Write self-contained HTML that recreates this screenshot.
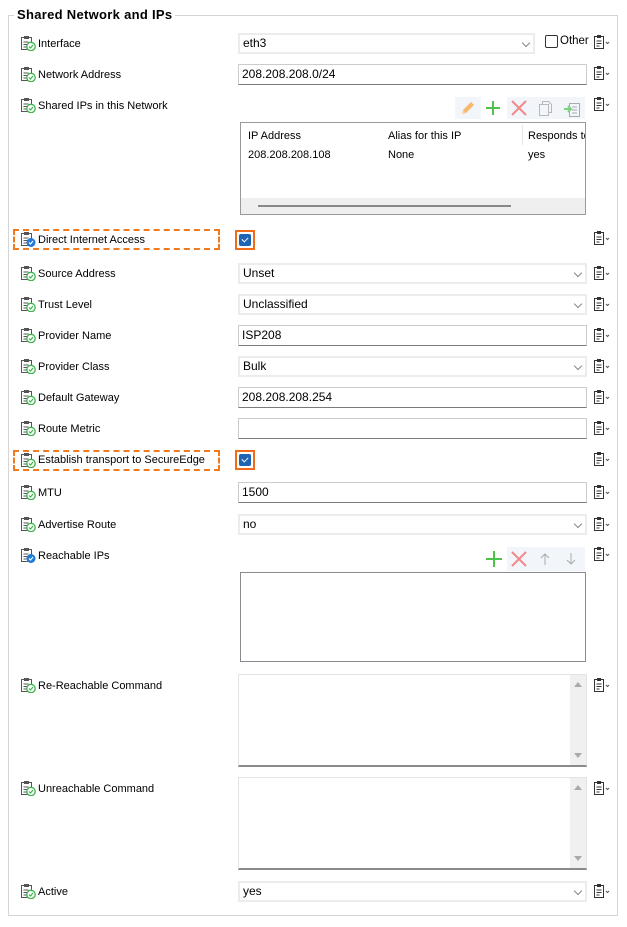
<!DOCTYPE html>
<html><head><meta charset="utf-8"><style>
*{box-sizing:border-box;margin:0;padding:0}
body{width:627px;height:927px;background:#fff;font-family:"Liberation Sans",sans-serif;font-size:12px;color:#000;position:relative;overflow:hidden}
.a{position:absolute}
.fs{left:8px;top:15px;width:610px;height:901px;border:1px solid #d5d5d5}
.title{left:14px;top:7px;background:#fff;padding:0 3px;font-weight:bold;font-size:13px;letter-spacing:0.3px}
.lbl{left:38px;font-size:11px;line-height:14px;white-space:nowrap}
.li{left:20px;width:16px;height:16px}
.ri{left:593px;width:18px;height:16px}
.inp{left:238px;width:349px;height:21px;border:1px solid #ccc;border-bottom:1px solid #7a7a7a;background:#fff;padding:2px 3px;line-height:15px}
.sel{left:238px;width:349px;height:21px;border:2px solid #ececec;background:#fff;padding:1px 3px;line-height:15px}
.sel:after{content:"";position:absolute;right:4px;top:5px;width:5px;height:5px;border-right:1px solid #888;border-bottom:1px solid #888;transform:rotate(45deg)}
.dash{border:2px dashed #ef7a1f}
.cb{width:20px;height:20px;border:2px solid #f06c1a;padding:2px}
.cb div{width:12px;height:12px;background:#1e64b4;border-radius:2px;position:relative}
.cb div:after{content:"";position:absolute;left:4px;top:2px;width:3px;height:5px;border-right:1px solid #fff;border-bottom:1px solid #fff;transform:rotate(45deg)}
.ta{left:238px;width:349px;height:93px;border:1px solid #e3e3e3;border-bottom:2px solid #8a8a8a}
.sb{right:0;top:0;width:16px;height:100%;background:#f0f0f0}
</style></head><body>
<svg width="0" height="0" style="position:absolute"><defs>
<symbol id="clip" viewBox="0 0 16 16"><rect x="1.5" y="2.5" width="10" height="12" fill="#fff" stroke="#555"/><rect x="4" y="1" width="5" height="3" fill="#555"/><path d="M3.5 7h5M3.5 9.5h5M3.5 12h3" stroke="#555"/></symbol>
<symbol id="ok" viewBox="0 0 16 16"><use href="#clip"/><circle cx="11" cy="11.5" r="4.2" fill="#fff" stroke="#3cb44a" stroke-width="1.3"/><path d="M9 11.5l1.5 1.5 2.5-3" fill="none" stroke="#3cb44a" stroke-width="1.2"/></symbol>
<symbol id="blue" viewBox="0 0 16 16"><use href="#clip"/><circle cx="11" cy="11.5" r="4.5" fill="#1f7ad8"/><path d="M9 11.5l1.5 1.5 2.5-3" fill="none" stroke="#fff" stroke-width="1.2"/></symbol>
<symbol id="r" viewBox="0 0 18 16"><rect x="1.5" y="2.5" width="9" height="12" fill="#fff" stroke="#333"/><rect x="4" y="1" width="4" height="3" fill="#333"/><path d="M3.5 7h5M3.5 9.5h5M3.5 12h3" stroke="#333"/><path d="M13 8l1.5 1.5 1.5-1.5" fill="none" stroke="#555"/></symbol>
</defs></svg>
<div class="a fs"></div>
<div class="a title">Shared Network and IPs</div>

<svg class="a li" style="top:35px"><use href="#ok"/></svg><div class="a lbl" style="top:37px">Interface</div>
<svg class="a li" style="top:66px"><use href="#ok"/></svg><div class="a lbl" style="top:68px">Network Address</div>
<svg class="a li" style="top:97px"><use href="#ok"/></svg><div class="a lbl" style="top:99px">Shared IPs in this Network</div>
<div class="a dash" style="left:13px;top:229px;width:207px;height:21px"></div>
<svg class="a li" style="top:231px"><use href="#blue"/></svg><div class="a lbl" style="top:233px">Direct Internet Access</div>
<svg class="a li" style="top:265px"><use href="#ok"/></svg><div class="a lbl" style="top:267px">Source Address</div>
<svg class="a li" style="top:296px"><use href="#ok"/></svg><div class="a lbl" style="top:298px">Trust Level</div>
<svg class="a li" style="top:327px"><use href="#ok"/></svg><div class="a lbl" style="top:329px">Provider Name</div>
<svg class="a li" style="top:358px"><use href="#ok"/></svg><div class="a lbl" style="top:360px">Provider Class</div>
<svg class="a li" style="top:389px"><use href="#ok"/></svg><div class="a lbl" style="top:391px">Default Gateway</div>
<svg class="a li" style="top:420px"><use href="#ok"/></svg><div class="a lbl" style="top:422px">Route Metric</div>
<div class="a dash" style="left:13px;top:450px;width:207px;height:21px"></div>
<svg class="a li" style="top:452px"><use href="#ok"/></svg><div class="a lbl" style="top:453px">Establish transport to SecureEdge</div>
<svg class="a li" style="top:484px"><use href="#ok"/></svg><div class="a lbl" style="top:486px">MTU</div>
<svg class="a li" style="top:516px"><use href="#ok"/></svg><div class="a lbl" style="top:518px">Advertise Route</div>
<svg class="a li" style="top:547px"><use href="#blue"/></svg><div class="a lbl" style="top:549px">Reachable IPs</div>
<svg class="a li" style="top:677px"><use href="#ok"/></svg><div class="a lbl" style="top:679px">Re-Reachable Command</div>
<svg class="a li" style="top:780px"><use href="#ok"/></svg><div class="a lbl" style="top:782px">Unreachable Command</div>
<svg class="a li" style="top:883px"><use href="#ok"/></svg><div class="a lbl" style="top:885px">Active</div>

<svg class="a ri" style="top:34px"><use href="#r"/></svg>
<svg class="a ri" style="top:65px"><use href="#r"/></svg>
<svg class="a ri" style="top:96px"><use href="#r"/></svg>
<svg class="a ri" style="top:230px"><use href="#r"/></svg>
<svg class="a ri" style="top:265px"><use href="#r"/></svg>
<svg class="a ri" style="top:296px"><use href="#r"/></svg>
<svg class="a ri" style="top:327px"><use href="#r"/></svg>
<svg class="a ri" style="top:358px"><use href="#r"/></svg>
<svg class="a ri" style="top:389px"><use href="#r"/></svg>
<svg class="a ri" style="top:420px"><use href="#r"/></svg>
<svg class="a ri" style="top:451px"><use href="#r"/></svg>
<svg class="a ri" style="top:484px"><use href="#r"/></svg>
<svg class="a ri" style="top:516px"><use href="#r"/></svg>
<svg class="a ri" style="top:546px"><use href="#r"/></svg>
<svg class="a ri" style="top:677px"><use href="#r"/></svg>
<svg class="a ri" style="top:780px"><use href="#r"/></svg>
<svg class="a ri" style="top:883px"><use href="#r"/></svg>

<div class="a sel" style="top:33px;width:297px">eth3</div>
<div class="a" style="left:545px;top:35px;width:13px;height:13px;border:1px solid #333;border-radius:2px"></div>
<div class="a" style="left:560px;top:35px;font-size:11.5px">Other</div>
<div class="a inp" style="top:64px">208.208.208.0/24</div>

<div class="a" style="left:455px;top:97px;width:26px;height:22px;background:#f2f5fa"></div>
<svg class="a" style="left:459px;top:99px" width="18" height="18"><path d="M3 15l1-4 8-8 3 3-8 8z" fill="#f6b86a"/><path d="M3 15l1-4 3 3z" fill="#f4d7a8"/></svg>
<svg class="a" style="left:484px;top:99px" width="18" height="18"><path d="M9 2v14M2 9h14" stroke="#4cc44a" stroke-width="2"/></svg>
<div class="a" style="left:507px;top:97px;width:78px;height:22px;background:#f2f5fa"></div>
<svg class="a" style="left:510px;top:99px" width="18" height="18"><path d="M2 2l14 14M16 2L2 16" stroke="#f08a8a" stroke-width="2"/></svg>
<svg class="a" style="left:538px;top:100px" width="16" height="16"><rect x="1.5" y="4.5" width="9" height="11" fill="none" stroke="#b8b8b8"/><path d="M4.5 4.5v-3h6l3 3v8h-3" fill="none" stroke="#b8b8b8"/></svg>
<svg class="a" style="left:563px;top:100px" width="18" height="18"><rect x="6.5" y="3.5" width="10" height="13" fill="none" stroke="#aaa"/><path d="M9 7h5M9 10h5M9 13h5" stroke="#aaa"/><path d="M1 9h6M5 6l3 3-3 3" fill="none" stroke="#7fd07f" stroke-width="2"/></svg>

<div class="a" style="left:240px;top:122px;width:346px;height:93px;border:1px solid #999;overflow:hidden;font-size:11px">
 <div class="a" style="left:7px;top:7px">IP Address</div>
 <div class="a" style="left:147px;top:7px">Alias for this IP</div>
 <div class="a" style="left:281px;top:2px;width:1px;height:20px;background:#e5e5e5"></div>
 <div class="a" style="left:287px;top:7px;white-space:nowrap">Responds to</div>
 <div class="a" style="left:7px;top:26px">208.208.208.108</div>
 <div class="a" style="left:147px;top:26px">None</div>
 <div class="a" style="left:287px;top:26px">yes</div>
 <div class="a" style="left:0;top:75px;width:344px;height:16px;background:#efefef"></div>
 <div class="a" style="left:17px;top:82px;width:253px;height:2px;background:#888"></div>
</div>

<div class="a cb" style="left:235px;top:230px"><div></div></div>
<div class="a sel" style="top:263px">Unset</div>
<div class="a sel" style="top:294px">Unclassified</div>
<div class="a inp" style="top:325px">ISP208</div>
<div class="a sel" style="top:356px">Bulk</div>
<div class="a inp" style="top:387px">208.208.208.254</div>
<div class="a inp" style="top:418px"></div>
<div class="a cb" style="left:235px;top:450px"><div></div></div>
<div class="a inp" style="top:482px">1500</div>
<div class="a sel" style="top:514px">no</div>

<svg class="a" style="left:485px;top:550px" width="18" height="18"><path d="M9 1v16M1 9h16" stroke="#4cc44a" stroke-width="2"/></svg>
<div class="a" style="left:507px;top:547px;width:78px;height:24px;background:#f2f5fa"></div>
<svg class="a" style="left:510px;top:550px" width="18" height="18"><path d="M2 2l14 14M16 2L2 16" stroke="#f08a8a" stroke-width="2"/></svg>
<svg class="a" style="left:539px;top:552px" width="12" height="14"><path d="M6 13V2M2 6l4-4 4 4" fill="none" stroke="#aaa"/></svg>
<svg class="a" style="left:565px;top:552px" width="12" height="14"><path d="M6 1v11M2 8l4 4 4-4" fill="none" stroke="#aaa"/></svg>
<div class="a" style="left:240px;top:572px;width:346px;height:90px;border:1px solid #8a8a90"></div>

<div class="a ta" style="top:674px"><div class="a sb"><div class="a" style="left:4px;top:7px;border:4px solid transparent;border-bottom:5px solid #aaa;border-top:0"></div><div class="a" style="left:4px;bottom:7px;border:4px solid transparent;border-top:5px solid #aaa;border-bottom:0"></div></div></div>
<div class="a ta" style="top:777px"><div class="a sb"><div class="a" style="left:4px;top:7px;border:4px solid transparent;border-bottom:5px solid #aaa;border-top:0"></div><div class="a" style="left:4px;bottom:7px;border:4px solid transparent;border-top:5px solid #aaa;border-bottom:0"></div></div></div>
<div class="a sel" style="top:881px">yes</div>
</body></html>
